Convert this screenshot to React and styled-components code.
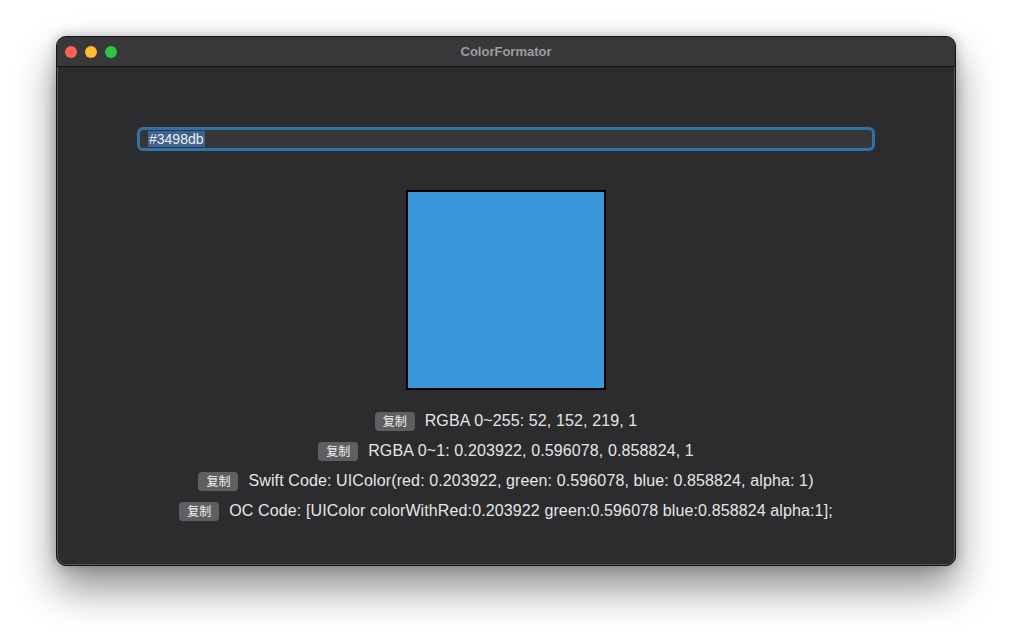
import React from "react";
import styled, { createGlobalStyle } from "styled-components";

const GlobalStyle = createGlobalStyle`
  html, body {
    margin: 0;
    padding: 0;
    background: #ffffff;
    font-family: "Liberation Sans", "Noto Sans CJK SC", sans-serif;
  }
`;

const Page = styled.div`
  width: 1012px;
  height: 640px;
  padding: 36px 56px 0;
  box-sizing: border-box;
  overflow: hidden;
`;

const Window = styled.div`
  width: 900px;
  height: 530px;
  border-radius: 10px;
  background: #2c2c2e;
  border: 1px solid #141414;
  box-shadow: inset 0 0 0 1px #555558, 0 22px 40px rgba(0, 0, 0, 0.45),
    0 0 12px rgba(0, 0, 0, 0.25);
  box-sizing: border-box;
  display: flex;
  flex-direction: column;
  overflow: hidden;
`;

const TitleBar = styled.div`
  height: 29px;
  flex-shrink: 0;
  background: #38383a;
  border-bottom: 1px solid #121212;
  display: grid;
  grid-template-columns: 80px 1fr 80px;
  align-items: center;
  padding: 0 8px;
`;

const Lights = styled.div`
  display: flex;
  gap: 8px;
`;

const Light = styled.span`
  width: 12px;
  height: 12px;
  border-radius: 50%;
  background: ${(p) => p.color};
`;

const Title = styled.div`
  text-align: center;
  font-size: 13px;
  font-weight: bold;
  color: #9d9d9f;
`;

const Content = styled.div`
  display: flex;
  flex-direction: column;
  align-items: center;
  padding: 60px 80px 0;
`;

const Field = styled.div`
  align-self: stretch;
  height: 24px;
  border-radius: 6px;
  border: 3px solid #2f72a8;
  background: #363638;
  box-sizing: border-box;
  display: flex;
  align-items: center;
  padding-left: 8px;
`;

const Selected = styled.span`
  font-size: 14px;
  color: #eeeeee;
  background: #3c6391;
  line-height: 16px;
  padding: 0 1px;
`;

const Swatch = styled.div`
  margin-top: 39px;
  width: 200px;
  height: 200px;
  box-sizing: border-box;
  border: 2px solid #000;
  background: ${(p) => p.color};
`;

const Rows = styled.div`
  margin-top: 16px;
  display: flex;
  flex-direction: column;
  align-items: center;
`;

const Row = styled.div`
  height: 30px;
  display: flex;
  align-items: center;
  gap: 10px;
`;

const CopyButton = styled.button`
  height: 19px;
  padding: 0 8px 1px;
  border: none;
  border-radius: 4px;
  background: #5f5f61;
  color: #f2f2f2;
  font-size: 12px;
  font-family: "Noto Sans CJK SC", sans-serif;
  line-height: 18px;
  cursor: pointer;
`;

const Label = styled.span`
  font-size: 16px;
  letter-spacing: 0.12px;
  color: #e6e6e6;
`;

const rows = [
  "RGBA 0~255: 52, 152, 219, 1",
  "RGBA 0~1: 0.203922, 0.596078, 0.858824, 1",
  "Swift Code: UIColor(red: 0.203922, green: 0.596078, blue: 0.858824, alpha: 1)",
  "OC Code: [UIColor colorWithRed:0.203922 green:0.596078 blue:0.858824 alpha:1];",
];

export default function App() {
  return (
    <Page>
      <GlobalStyle />
      <Window>
        <TitleBar>
          <Lights>
            <Light color="#fe5f57" />
            <Light color="#febc2e" />
            <Light color="#28c840" />
          </Lights>
          <Title>ColorFormator</Title>
          <span />
        </TitleBar>
        <Content>
          <Field>
            <Selected>#3498db</Selected>
          </Field>
          <Swatch color="#3a96da" />
          <Rows>
            {rows.map((r) => (
              <Row key={r}>
                <CopyButton>复制</CopyButton>
                <Label>{r}</Label>
              </Row>
            ))}
          </Rows>
        </Content>
      </Window>
    </Page>
  );
}
